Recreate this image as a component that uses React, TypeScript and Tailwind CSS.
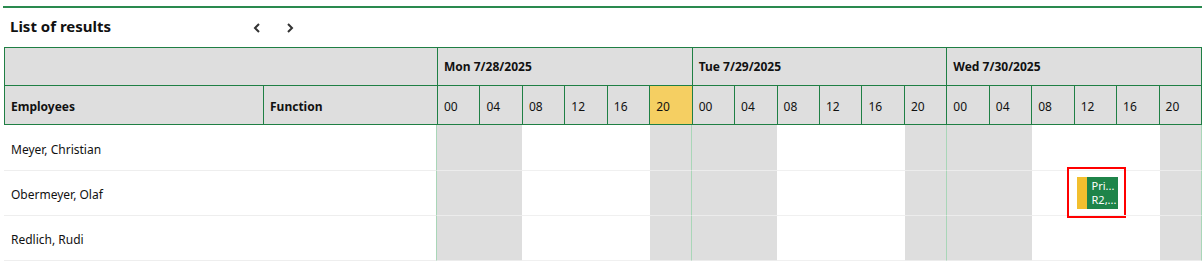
import React from "react";

const days = ["Mon 7/28/2025", "Tue 7/29/2025", "Wed 7/30/2025"];
const hours = ["00", "04", "08", "12", "16", "20"];
const employees = ["Meyer, Christian", "Obermeyer, Olaf", "Redlich, Rudi"];

// grey = outside working hours
const isGrey = (h: number) => h === 0 || h === 1 || h === 5;

const cols = "grid grid-cols-[259px_174px_repeat(18,minmax(0,1fr))]";

const App: React.FC = () => {
  return (
    <div className="w-[1202px] h-[263px] bg-white pt-[6px] pl-[3px] font-['Noto_Sans','Open_Sans',sans-serif] text-[#111]">
      <div className="border-t-2 border-[#2a8a4f]">
        <div className="flex items-center h-[39px] pl-[7px]">
          <span className="text-[15px] font-bold w-[240px] -mt-[2px]">List of results</span>
          <button className="w-[14px] h-[16px] flex items-center justify-center">
            <svg width="8" height="10" viewBox="0 0 8 10">
              <path d="M6 1 L2 5 L6 9" fill="none" stroke="#333" strokeWidth="2" />
            </svg>
          </button>
          <button className="w-[14px] h-[16px] ml-[19px] flex items-center justify-center">
            <svg width="8" height="10" viewBox="0 0 8 10">
              <path d="M2 1 L6 5 L2 9" fill="none" stroke="#333" strokeWidth="2" />
            </svg>
          </button>
        </div>

        <div className="ml-[1px] w-[1198px]">
          {/* header */}
          <div className={`${cols} border-l border-t border-[#1f7f44] bg-[#dedede] text-[12px]`}>
            <div className="col-span-2 h-[38px] border-r border-b border-[#1f7f44]" />
            {days.map((d) => (
              <div key={d} className="col-span-6 h-[38px] border-r border-b border-[#1f7f44] font-bold flex items-center pl-[6px]">
                {d}
              </div>
            ))}
            <div className="h-[39px] border-r border-b border-[#1f7f44] font-bold flex items-center pl-[6px] pt-[3px]">Employees</div>
            <div className="h-[39px] border-r border-b border-[#1f7f44] font-bold flex items-center pl-[6px] pt-[3px]">Function</div>
            {days.map((d, di) =>
              hours.map((h, hi) => (
                <div
                  key={d + h}
                  className={`h-[39px] border-r border-b border-[#1f7f44] flex items-center pl-[6px] pt-[3px] ${
                    di === 0 && hi === 5 ? "bg-[#f5cf62]" : ""
                  }`}
                >
                  {h}
                </div>
              ))
            )}
          </div>

          {/* body */}
          {employees.map((name, ri) => {
            const h = ri === 0 ? "h-[46px]" : "h-[45px]";
            return (
              <div key={name} className={`${cols} text-[12px]`}>
                <div className={`${h} border-b border-[#eeeeee] flex items-center pl-[7px] pt-[4px]`}>{name}</div>
                <div className={`${h} border-b border-[#eeeeee] border-r border-r-[#a9d6b8]`} />
                {days.map((d, di) =>
                  hours.map((hr, hi) => (
                    <div
                      key={d + hr}
                      className={`relative ${h} border-b ${
                        isGrey(hi) ? "bg-[#dedede] border-[#ececec]" : "border-[#f0f0f0]"
                      } ${hi === 5 ? "border-r border-r-[#a9d6b8]" : ""}`}
                    >
                      {ri === 1 && di === 2 && hi === 3 && (
                        <>
                          <div className="absolute left-[2px] top-[6px] h-[32px] w-[41px] flex">
                            <div className="w-[10px] bg-[#f2bf2e]" />
                            <div className="flex-1 bg-[#1e8449] text-white text-[11px] leading-[14px] pl-[5px] pt-[2px]">
                              <div>Pri...</div>
                              <div>R2,...</div>
                            </div>
                          </div>
                          <div className="absolute left-[-8px] top-[-4px] w-[59px] h-[51px] border-2 border-[#ff0000]" />
                        </>
                      )}
                    </div>
                  ))
                )}
              </div>
            );
          })}
        </div>
      </div>
    </div>
  );
};

export default App;
